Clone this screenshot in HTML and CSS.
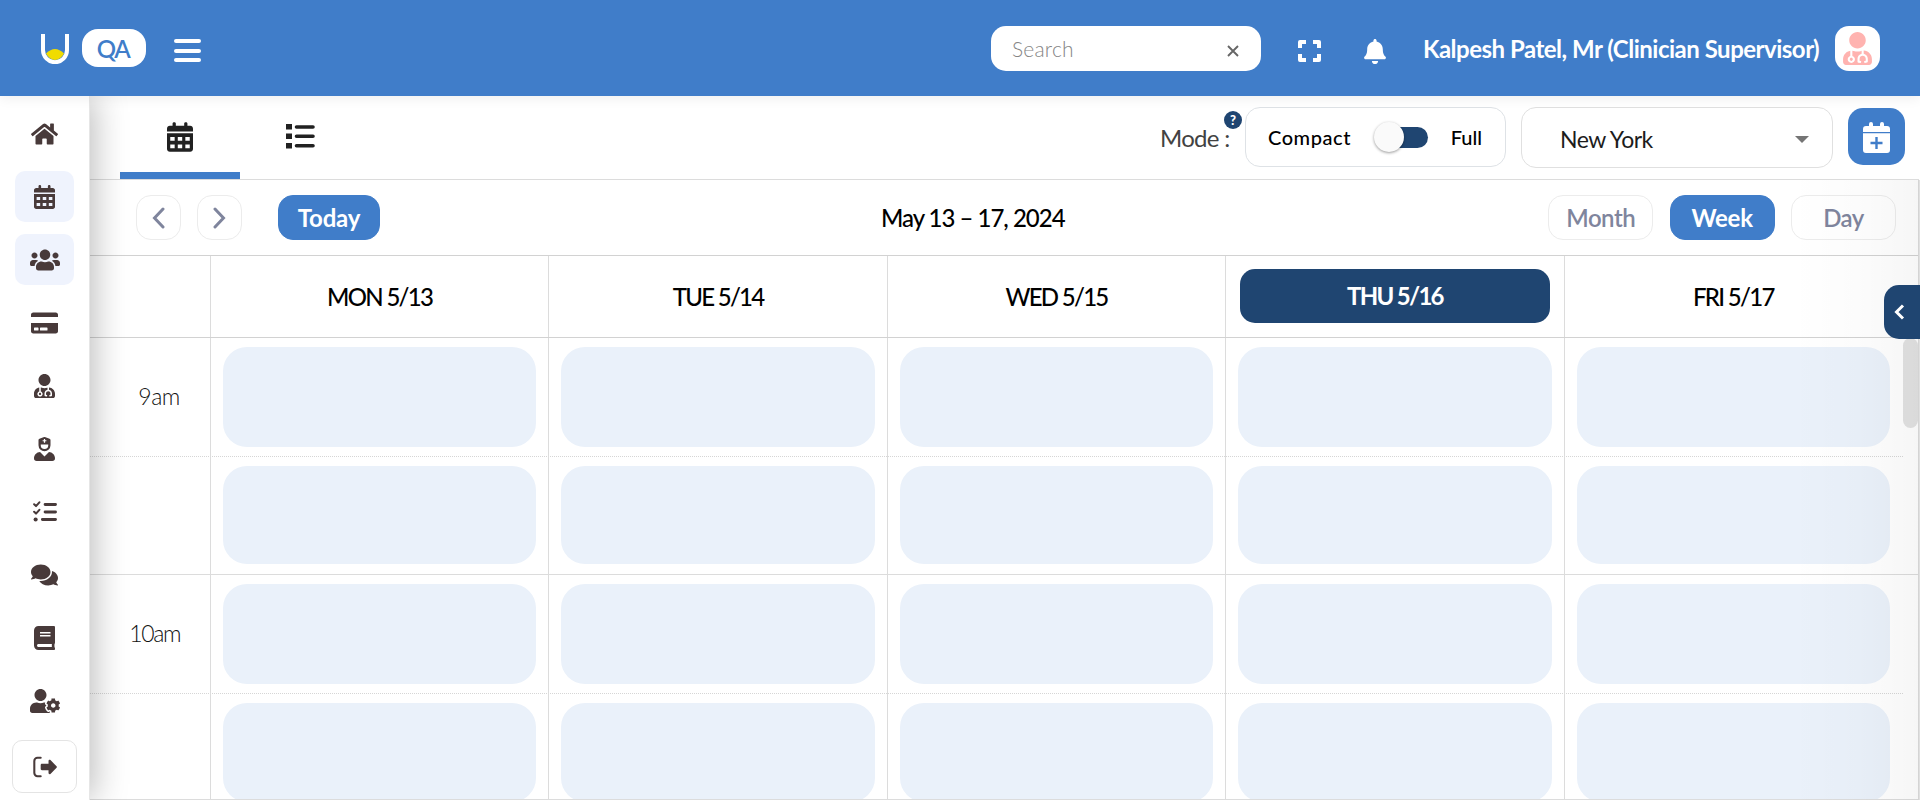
FILE: index.html
```html
<!DOCTYPE html>
<html lang="en">
<head>
<meta charset="utf-8">
<title>Calendar</title>
<link rel="stylesheet" href="styles.css">
</head>
<body>
<svg class="defs" aria-hidden="true">
  <symbol id="i-cal" viewBox="0 0 448 512"><path fill-rule="evenodd" d="M0 464c0 26.500 21.500 48 48 48h352c26.500 0 48-21.500 48-48V192H0zM56 256h76v64h-76zM186 256h76v64h-76zM316 256h76v64h-76zM56 384h76v64h-76zM186 384h76v64h-76zM316 384h76v64h-76zM400 64h-48V24c0-32-56-32-56 0v40H152V24c0-32-56-32-56 0v40H48C21.500 64 0 85.500 0 112v48h448v-48c0-26.500-21.500-48-48-48z"/></symbol>
  <symbol id="i-doc" viewBox="0 0 448 512"><path d="M224 256c70.700 0 128-57.300 128-128S294.700 0 224 0 96 57.300 96 128s57.300 128 128 128zM104 424c0 13.300 10.700 24 24 24s24-10.700 24-24-10.700-24-24-24-24 10.700-24 24zm216-135.400v49c36.500 7.400 64 39.800 64 78.400v41.700c0 7.600-5.400 14.200-12.900 15.700l-32.200 6.400c-4.300.9-8.500-1.900-9.400-6.300l-3.100-15.700c-.9-4.300 1.900-8.600 6.300-9.400l19.300-3.900V416c0-62.800-96-65.100-96 1.900v26.700l19.300 3.900c4.300.9 7.100 5.100 6.300 9.400l-3.100 15.700c-.9 4.300-5.100 7.100-9.400 6.300l-31.200-4.200c-7.900-1.100-13.800-7.800-13.800-15.900V416c0-38.600 27.500-70.900 64-78.400v-45.200c-2.200.7-4.400 1.100-6.600 1.900-18 6.300-37.300 9.800-57.400 9.800s-39.400-3.500-57.400-9.800c-7.400-2.600-14.900-4.200-22.600-5.200v81.600c23.100 6.900 40 28.100 40 53.400 0 30.900-25.100 56-56 56s-56-25.100-56-56c0-25.300 16.900-46.500 40-53.400v-80.400C48.500 301 0 355.800 0 422.400v44.800C0 491.900 20.100 512 44.800 512h358.400c24.700 0 44.800-20.100 44.800-44.800v-44.800c0-72-56.800-130.300-128-133.800z"/></symbol>
</svg>

<header class="topbar">
  <div class="brand">
    <svg class="logo" viewBox="0 0 28 30"><path d="M2 0v16a12 12.200 0 0 0 24 0V0" fill="none" stroke="#fff" stroke-width="4"/><path d="M5 19.500Q14 10.500 23 19.500Q19.500 26 14 26T5 19.500z" fill="#f0dc00"/></svg>
    <span class="env">QA</span>
    <button class="burger" aria-label="Menu"><i></i><i></i><i></i></button>
  </div>
  <div class="top-right">
    <div class="search"><span class="search-text">Search</span>
      <svg width="12" height="12" viewBox="0 0 12 12"><path d="M1 1l10 10M11 1L1 11" stroke="#666" stroke-width="1.900"/></svg>
    </div>
    <svg class="expand" viewBox="0 0 23 22"><path d="M2 8V2h6M15 2h6v6M21 14v6h-6M8 20H2v-6" fill="none" stroke="#fff" stroke-width="4" stroke-linejoin="round"/></svg>
    <svg class="bell" viewBox="0 0 448 512"><path fill="#fff" d="M224 512c35.300 0 63.900-28.600 63.900-64H160.100c0 35.400 28.600 64 63.900 64zm215.400-149.700c-19.300-20.800-55.500-52-55.500-154.300 0-77.700-54.500-139.900-127.900-155.200V32c0-17.700-14.300-32-32-32s-32 14.300-32 32v20.800C118.600 68.100 64.100 130.300 64.100 208c0 102.300-36.200 133.500-55.500 154.300-6 6.400-8.700 14.100-8.600 21.700.1 16.400 13 32 32.100 32h383.800c19.100 0 32-15.600 32.100-32 .1-7.600-2.700-15.300-8.600-21.700z"/></svg>
    <span class="user">Kalpesh Patel, Mr (Clinician Supervisor)</span>
    <span class="avatar"><svg><use href="#i-doc"/></svg></span>
  </div>
</header>

<div class="body">
  <nav class="side">
    <a class="nav"><svg class="w27" viewBox="0 0 576 512"><path d="M280.370 148.260L96 300.110V464a16 16 0 0 0 16 16l112.060-.29a16 16 0 0 0 15.920-16V368a16 16 0 0 1 16-16h64a16 16 0 0 1 16 16v95.640a16 16 0 0 0 16 16.050L464 480a16 16 0 0 0 16-16V300L295.670 148.260a12.190 12.190 0 0 0-15.300 0zM571.600 251.470L488 182.560V44.050a12 12 0 0 0-12-12h-56a12 12 0 0 0-12 12v72.610L318.470 43a48 48 0 0 0-61 0L4.340 251.470a12 12 0 0 0-1.600 16.900l25.500 31A12 12 0 0 0 45.150 301l235.220-193.740a12.190 12.190 0 0 1 15.300 0L530.900 301a12 12 0 0 0 16.900-1.600l25.500-31a12 12 0 0 0-1.700-16.930z"/></svg></a>
    <a class="nav on"><svg class="w21"><use href="#i-cal"/></svg></a>
    <a class="nav on"><svg class="w30" viewBox="0 0 640 512"><path d="M96 224c35.300 0 64-28.700 64-64s-28.700-64-64-64-64 28.700-64 64 28.700 64 64 64zm448 0c35.300 0 64-28.700 64-64s-28.700-64-64-64-64 28.700-64 64 28.700 64 64 64zm32 32h-64c-17.600 0-33.500 7.100-45.100 18.600 40.300 22.100 68.900 62 75.100 109.400h66c17.700 0 32-14.300 32-32v-32c0-35.300-28.700-64-64-64zm-256 0c61.900 0 112-50.100 112-112S381.900 32 320 32 208 82.100 208 144s50.100 112 112 112zm76.800 32h-8.300c-20.800 10-43.900 16-68.500 16s-47.600-6-68.500-16h-8.300C179.600 288 128 339.600 128 403.200V432c0 26.500 21.500 48 48 48h288c26.500 0 48-21.500 48-48v-28.800c0-63.600-51.600-115.200-115.200-115.200zm-223.700-13.400C161.500 263.100 145.600 256 128 256H64c-35.300 0-64 28.700-64 64v32c0 17.700 14.300 32 32 32h65.900c6.300-47.400 34.900-87.300 75.200-109.400z"/></svg></a>
    <a class="nav"><svg class="w27" viewBox="0 0 576 512"><path d="M0 432c0 26.500 21.500 48 48 48h480c26.500 0 48-21.500 48-48V256H0v176zm192-68c0-6.600 5.400-12 12-12h136c6.600 0 12 5.400 12 12v40c0 6.600-5.400 12-12 12H204c-6.600 0-12-5.400-12-12v-40zm-128 0c0-6.600 5.400-12 12-12h72c6.600 0 12 5.400 12 12v40c0 6.600-5.400 12-12 12H76c-6.600 0-12-5.400-12-12v-40zM576 80v48H0V80c0-26.500 21.500-48 48-48h480c26.500 0 48 21.500 48 48z"/></svg></a>
    <a class="nav"><svg class="w21"><use href="#i-doc"/></svg></a>
    <a class="nav"><svg class="w21" viewBox="0 0 448 512"><path d="M319.410,320,224,415.390,128.590,320C57.100,323.100,0,381.600,0,453.790A58.210,58.210,0,0,0,58.210,512H389.790A58.210,58.210,0,0,0,448,453.790C448,381.600,390.900,323.100,319.410,320ZM224,304A128,128,0,0,0,352,176V65.820a32,32,0,0,0-20.760-30L246.470,4.070a64,64,0,0,0-44.940,0L116.760,35.860A32,32,0,0,0,96,65.820V176A128,128,0,0,0,224,304ZM184,71.670a5,5,0,0,1,5-5h21.670V45a5,5,0,0,1,5-5h16.660a5,5,0,0,1,5,5V66.670H259a5,5,0,0,1,5,5V88.330a5,5,0,0,1-5,5H237.330V115a5,5,0,0,1-5,5H215.670a5,5,0,0,1-5-5V93.330H189a5,5,0,0,1-5-5ZM144,160H304v16a80,80,0,0,1-160,0Z"/></svg></a>
    <a class="nav"><svg class="w24" viewBox="0 0 512 512"><path d="M24 92l40 38 72-80M24 252l40 38 72-80" class="line"/><path d="M258 96h222M258 256h222M200 416h280" class="line thick"/><circle cx="56" cy="416" r="44"/></svg></a>
    <a class="nav"><svg class="w27" viewBox="0 0 576 512"><path d="M416 192c0-88.400-93.100-160-208-160S0 103.600 0 192c0 34.300 14.100 65.900 38 92-13.400 30.200-35.500 54.200-35.800 54.500-2.200 2.300-2.800 5.700-1.500 8.700S4.800 352 8 352c36.600 0 66.900-12.300 88.700-25 32.200 15.700 70.300 25 111.300 25 114.900 0 208-71.600 208-160zm122 220c23.900-26 38-57.700 38-92 0-66.900-53.500-124.200-129.300-148.100.9 6.600 1.300 13.300 1.300 20.100 0 105.900-107.700 192-240 192-10.800 0-21.300-.8-31.700-1.900C207.800 439.600 281.800 480 368 480c41 0 79.100-9.200 111.300-25 21.800 12.700 52.100 25 88.700 25 3.200 0 6.100-1.900 7.300-4.800 1.300-2.900.7-6.300-1.500-8.700-.3-.3-22.400-24.200-35.800-54.500z"/></svg></a>
    <a class="nav"><svg class="w21" viewBox="0 0 448 512"><path d="M448 360V24c0-13.300-10.700-24-24-24H96C43 0 0 43 0 96v320c0 53 43 96 96 96h328c13.300 0 24-10.700 24-24v-16c0-7.500-3.500-14.300-8.900-18.700-4.200-15.400-4.200-59.300 0-74.700 5.400-4.300 8.900-11.100 8.900-18.600zM128 134c0-3.300 2.700-6 6-6h212c3.300 0 6 2.700 6 6v20c0 3.300-2.700 6-6 6H134c-3.300 0-6-2.700-6-6v-20zm0 64c0-3.300 2.700-6 6-6h212c3.300 0 6 2.700 6 6v20c0 3.300-2.700 6-6 6H134c-3.300 0-6-2.700-6-6v-20zm253.400 250H96c-17.700 0-32-14.300-32-32 0-17.600 14.400-32 32-32h285.400c-1.900 17.100-1.900 46.900 0 64z"/></svg></a>
    <a class="nav"><svg class="w30" viewBox="0 0 640 512"><path d="M610.500 373.300c2.600-14.100 2.600-28.500 0-42.600l25.800-14.900c3-1.700 4.300-5.200 3.300-8.500-6.700-21.600-18.200-41.200-33.200-57.400-2.300-2.500-6-3.100-9-1.400l-25.800 14.900c-10.900-9.300-23.400-16.500-36.900-21.300v-29.800c0-3.400-2.400-6.400-5.700-7.100-22.300-5-45-4.800-66.200 0-3.300.7-5.700 3.700-5.700 7.100v29.800c-13.500 4.800-26 12-36.900 21.300l-25.800-14.900c-2.900-1.700-6.700-1.100-9 1.400-15 16.200-26.500 35.800-33.200 57.400-1 3.300.4 6.800 3.300 8.500l25.800 14.900c-2.600 14.100-2.600 28.500 0 42.600l-25.800 14.900c-3 1.700-4.300 5.200-3.300 8.500 6.700 21.600 18.200 41.100 33.200 57.400 2.300 2.500 6 3.100 9 1.400l25.800-14.900c10.900 9.300 23.400 16.500 36.900 21.300v29.800c0 3.400 2.400 6.400 5.700 7.100 22.300 5 45 4.800 66.200 0 3.300-.7 5.700-3.700 5.700-7.100v-29.800c13.500-4.800 26-12 36.900-21.300l25.800 14.900c2.900 1.700 6.700 1.100 9-1.400 15-16.200 26.500-35.800 33.200-57.400 1-3.300-.4-6.800-3.300-8.500l-25.800-14.900zM496 400.500c-26.800 0-48.500-21.800-48.500-48.500s21.800-48.500 48.500-48.500 48.500 21.800 48.500 48.500-21.700 48.500-48.500 48.500zM224 256c70.700 0 128-57.300 128-128S294.700 0 224 0 96 57.300 96 128s57.300 128 128 128zm201.200 226.500c-2.300-1.200-4.600-2.600-6.800-3.900l-7.900 4.600c-6 3.400-12.800 5.300-19.600 5.300-10.900 0-21.400-4.600-28.900-12.600-18.300-19.800-32.300-43.900-40.200-69.600-5.500-17.700 1.900-36.400 17.900-45.700l7.900-4.600c-.1-2.600-.1-5.200 0-7.800l-7.900-4.600c-16-9.200-23.400-28-17.900-45.700.9-2.900 2.200-5.800 3.200-8.700-3.800-.3-7.500-1.200-11.400-1.200h-16.700c-22.200 10.200-46.900 16-72.900 16s-50.600-5.800-72.900-16h-16.700C60.200 288 0 348.200 0 422.400V464c0 26.500 21.500 48 48 48h352c10.100 0 19.500-3.200 27.200-8.500-1.200-3.800-2-7.700-2-11.800v-9.200z"/></svg></a>
    <a class="logout"><svg class="w24" viewBox="0 0 512 512"><path d="M164 60H96a68 68 0 0 0-68 68v256a68 68 0 0 0 68 68h68" class="line"/><path d="M502 273L372 403c-15 15-41 4.500-41-17v-62H190c-14 0-26-12-26-26v-84c0-14 12-26 26-26h141v-62c0-21.400 25.900-32 41-17l130 130c9.300 9.400 9.300 24.600 0 34z"/></svg></a>
  </nav>

  <main class="main">
    <div class="tabs">
      <a class="tab active"><svg class="tab-cal"><use href="#i-cal"/></svg></a>
      <a class="tab"><svg class="tab-list" viewBox="0 0 29 25"><path d="M0 0h6v5.500H0zM0 9.500h6v5.500H0zM0 19h6v5.500H0z"/><path d="M10.500 3H27M10.500 12.300H27M10.500 21.700H27" stroke="#212121" stroke-width="3.600" stroke-linecap="round"/></svg></a>
      <div class="tools">
        <div class="mode"><span>Mode :</span><b class="help">?</b></div>
        <div class="switch-box"><span class="compact">Compact</span><span class="switch"><i></i></span><span class="full">Full</span></div>
        <div class="select"><span class="city">New York</span><i class="caret"></i></div>
        <button class="add" aria-label="Add"><svg viewBox="0 0 27 31"><path fill="#fff" d="M0 10V7q0-3 3-3h3V2q0-2 2-2t2 2v2h7V2q0-2 2-2t2 2v2h3q3 0 3 3v3z M0 11.300h27V28q0 3-3 3H3q-3 0-3-3z"/><path d="M13.500 15v12M7.500 21h12" stroke="#407dc9" stroke-width="2.400"/></svg></button>
      </div>
    </div>

    <div class="calendar">
      <div class="toolbar">
        <div class="group left">
          <button class="btn arrow"><svg viewBox="0 0 13 22"><path d="M11 2L2.500 11 11 20"/></svg></button>
          <button class="btn arrow"><svg viewBox="0 0 13 22"><path d="M2 2l8.500 9L2 20"/></svg></button>
          <button class="btn primary today"><span>Today</span></button>
        </div>
        <h2 class="title">May 13 – 17, 2024</h2>
        <div class="group right">
          <button class="btn view">Month</button>
          <button class="btn view primary">Week</button>
          <button class="btn view">Day</button>
        </div>
      </div>
      <div class="days">
        <div class="axis"></div>
        <div class="day"><span>MON 5/13</span></div>
        <div class="day"><span>TUE 5/14</span></div>
        <div class="day"><span>WED 5/15</span></div>
        <div class="day today-head"><span>THU 5/16</span></div>
        <div class="day"><span>FRI 5/17</span></div>
      </div>
      <div class="grid">
        <div class="row r1 half"><div class="axis">9am</div><div class="cell"><i></i></div><div class="cell"><i></i></div><div class="cell"><i></i></div><div class="cell"><i></i></div><div class="cell"><i></i></div></div>
        <div class="row r2"><div class="axis"></div><div class="cell"><i></i></div><div class="cell"><i></i></div><div class="cell"><i></i></div><div class="cell"><i></i></div><div class="cell"><i></i></div></div>
        <div class="row r1 half"><div class="axis ten">10am</div><div class="cell"><i></i></div><div class="cell"><i></i></div><div class="cell"><i></i></div><div class="cell"><i></i></div><div class="cell"><i></i></div></div>
        <div class="row r1"><div class="axis"></div><div class="cell"><i></i></div><div class="cell"><i></i></div><div class="cell"><i></i></div><div class="cell"><i></i></div><div class="cell"><i></i></div></div>
        <div class="thumb"></div>
      </div>
    </div>
    <div class="drawer-shade"></div>
    <button class="drawer" aria-label="Open panel"><svg viewBox="0 0 11 16"><path d="M9 1.500L2.500 8 9 14.500" fill="none" stroke="#fff" stroke-width="3"/></svg></button>
  </main>
</div>
</body>
</html>
```
FILE: styles.css
```css
* { box-sizing: border-box; }
html, body { height: 100%; }
body { margin: 0; overflow: hidden; background: #fff; color: #000; font-family: Lato, "Liberation Sans", sans-serif; font-size: 24px; display: flex; flex-direction: column; }
button { font: inherit; border: 0; padding: 0; background: none; }
svg { display: block; flex: none; }
.defs { display: none; }

/* top bar */
.topbar { height: 96px; flex: none; background: #407dc9; display: flex; align-items: flex-start; justify-content: space-between; padding: 26px 40px 0 41px; box-shadow: 0 2px 12px rgba(0,0,0,.07); position: relative; z-index: 3; }
.brand { display: flex; align-items: flex-start; }
.logo { width: 28px; height: 30px; margin-top: 8px; }
.env { width: 64px; height: 38px; margin: 3px 28px 0 13px; padding-right: 2px; border-radius: 16px; background: #fff; color: #407dc9; font-weight: 600; line-height: 39px; text-align: center; letter-spacing: -1.500px; }
.burger { width: 27px; height: 23px; margin-top: 13px; display: flex; flex-direction: column; justify-content: space-between; }
.burger i { height: 4px; border-radius: 2px; background: #fff; }
.top-right { display: flex; align-items: flex-start; }
.search { width: 270px; height: 45px; border-radius: 15px; background: #fff; display: flex; align-items: center; justify-content: space-between; padding: 0 22px 0 21px; }
.search svg { margin-top: 4px; }
.search-text { color: #858585; font-weight: 300; font-size: 21px; letter-spacing: .2px; }
.expand { width: 23px; height: 22px; margin: 14px 0 0 37px; }
.bell { width: 22px; height: 25px; margin: 13px 0 0 43px; }
.user { width: 412px; margin-left: 37px; line-height: 46px; color: #fff; font-weight: 700; white-space: nowrap; letter-spacing: -.5px; }
.avatar { width: 45px; height: 45px; border-radius: 14px; background: #fff; display: flex; justify-content: center; padding-top: 6px; }
.avatar svg { width: 29px; height: 33px; fill: #ffb3b0; }

/* side navigation */
.body { flex: 1; min-height: 0; display: flex; }
.side { width: 90px; flex: none; background: #fff; border-right: 1px solid #e6e6e6; box-shadow: 4px 0 34px rgba(0,0,0,.27); padding-top: 12px; display: flex; flex-direction: column; align-items: center; gap: 12px; position: relative; z-index: 2; }
.nav { width: 59px; height: 51px; border-radius: 10px; display: flex; align-items: center; justify-content: center; }
.nav.on { background: #eff3fd; }
.side svg { fill: #483a3a; height: 24px; }
.w21 { width: 21px; }
.w24 { width: 24px; }
.w27 { width: 27px; }
.w30 { width: 30px; }
.side .line { fill: none; stroke: #483a3a; stroke-width: 44; stroke-linecap: round; stroke-linejoin: round; }
.side .thick { stroke-width: 62; }
.logout { width: 65px; height: 53px; margin-top: 2px; border: 1px solid #e4e4e4; border-radius: 10px; display: flex; align-items: center; justify-content: center; }

/* tabs row */
.main { flex: 1; min-width: 0; position: relative; display: flex; flex-direction: column; }
.tabs { height: 83px; flex: none; display: flex; padding-left: 30px; }
.tab { width: 120px; display: flex; justify-content: center; padding-top: 26px; fill: #212121; }
.tab.active { border-bottom: 7px solid #407dc9; }
.tab-cal { width: 26px; height: 30px; }
.tab-list { width: 29px; height: 25px; margin-top: 2px; }
.tools { margin-left: auto; display: flex; align-items: flex-start; padding: 11px 15px 0 0; }
.mode { position: relative; width: 85px; padding-top: 18px; color: #424242; line-height: 26px; white-space: nowrap; letter-spacing: -.7px; }
.help { position: absolute; left: 64px; top: 4px; width: 18px; height: 18px; border-radius: 50%; background: #1f4571; color: #fff; font-size: 13px; font-weight: 900; line-height: 18px; letter-spacing: 0; text-align: center; }
.switch-box { width: 261px; height: 60px; border: 1px solid #dee2e6; border-radius: 15px; display: flex; align-items: center; padding: 0 23px 0 22px; font-size: 20px; font-weight: 500; }
.compact { width: 106px; letter-spacing: .55px; }
.switch { width: 54px; height: 21px; display: flex; align-items: center; border-radius: 11px; background: linear-gradient(90deg, transparent 11px, #1f4571 11px); }
.switch i { width: 30px; height: 30px; border-radius: 50%; background: #fafafa; box-shadow: 0 1px 3px rgba(0,0,0,.4); }
.full { margin-left: 23px; }
.select { width: 312px; height: 61px; margin-left: 15px; border: 1px solid #e0e0e0; border-radius: 15px; display: flex; align-items: center; justify-content: space-between; padding: 3px 23px 0 38px; color: #1c1c1c; }
.city { font-size: 23px; letter-spacing: -.5px; }
.caret { border: 7px solid transparent; border-top-color: #757575; border-bottom: 0; }
.add { width: 57px; height: 57px; margin: 1px 0 0 15px; border-radius: 15px; background: #407dc9; display: flex; justify-content: center; padding-top: 14px; }
.add svg { width: 27px; height: 31px; }

/* calendar */
.calendar { flex: 1; min-height: 0; width: 1829px; border: solid #dcdcdc; border-width: 1px 1px 1px 0; display: flex; flex-direction: column; }
.toolbar { height: 75px; flex: none; display: flex; align-items: center; padding: 0 22px 0 46px; }
.group { display: flex; }
.left { gap: 16px; }
.right { gap: 16.400px; margin-left: auto; }
.btn { height: 45px; border: 1px solid #ececec; border-radius: 15px; color: #7f859d; font-weight: 600; letter-spacing: -.5px; display: flex; align-items: center; justify-content: center; }
.arrow { width: 45px; }
.arrow svg { width: 13px; height: 22px; fill: none; stroke: #7f859d; stroke-width: 3; stroke-linecap: round; }
.primary { background: #407dc9; border-color: #407dc9; color: #fff; font-weight: 700; letter-spacing: -.2px; }
.today { width: 102px; margin-left: 20px; }
.view { width: 105px; }
.title { margin: 0 0 0 501px; font-size: 24px; font-weight: 500; letter-spacing: -1px; white-space: nowrap; }
.days, .row { display: grid; grid-template-columns: 120px repeat(5, 1fr); padding-right: 16px; flex: none; }
.days { height: 83px; border: solid #d2d2d2; border-width: 1px 0; }
.day { border-left: 1px solid #dcdcdc; display: flex; align-items: center; justify-content: center; padding-bottom: 1px; font-weight: 500; letter-spacing: -1.700px; }
.today-head { padding: 0 14px 1px; }
.today-head span { flex: 1; height: 54px; line-height: 54px; text-align: center; border-radius: 15px; background: #1f4571; color: #fff; font-weight: 700; }
.grid { position: relative; flex: 1; min-height: 0; overflow: hidden; }
.row { border-bottom: 1px solid #dcdcdc; }
.half { border-bottom: 0; background: repeating-linear-gradient(90deg, #d6d6d6 0 1px, transparent 1px 2px) 0 100% / calc(100% - 15px) 1px no-repeat; }
.r1 { height: 119px; }
.r2 { height: 118px; }
.axis { display: flex; align-items: center; justify-content: flex-end; padding: 0 30px 3px 0; font-weight: 300; font-size: 23px; letter-spacing: -.4px; color: #111; }
.ten { letter-spacing: -1.400px; }
.cell { border-left: 1px solid #dcdcdc; padding: 9px 12px 10px; display: flex; }
.half .cell { padding-bottom: 10px; }
.cell i { flex: 1; border-radius: 24px; background: #eaf1fa; }
.thumb { position: absolute; right: 0; top: 0; width: 15px; height: 90px; border-radius: 8px; background: #e2e2e2; }

/* slide-out drawer handle and its shade */
.drawer-shade { position: absolute; right: 0; top: 84px; bottom: 0; width: 130px; background: linear-gradient(90deg, rgba(0,0,0,0), rgba(0,0,0,.01) 50%, rgba(0,0,0,.035)); border-right: 1px solid #e0e0e0; pointer-events: none; }
.drawer { position: absolute; right: 0; top: 189px; width: 36px; height: 54px; border-radius: 15px 0 0 15px; background: #1f4571; display: flex; align-items: center; padding-left: 10px; }
.drawer svg { width: 11px; height: 16px; }
```
